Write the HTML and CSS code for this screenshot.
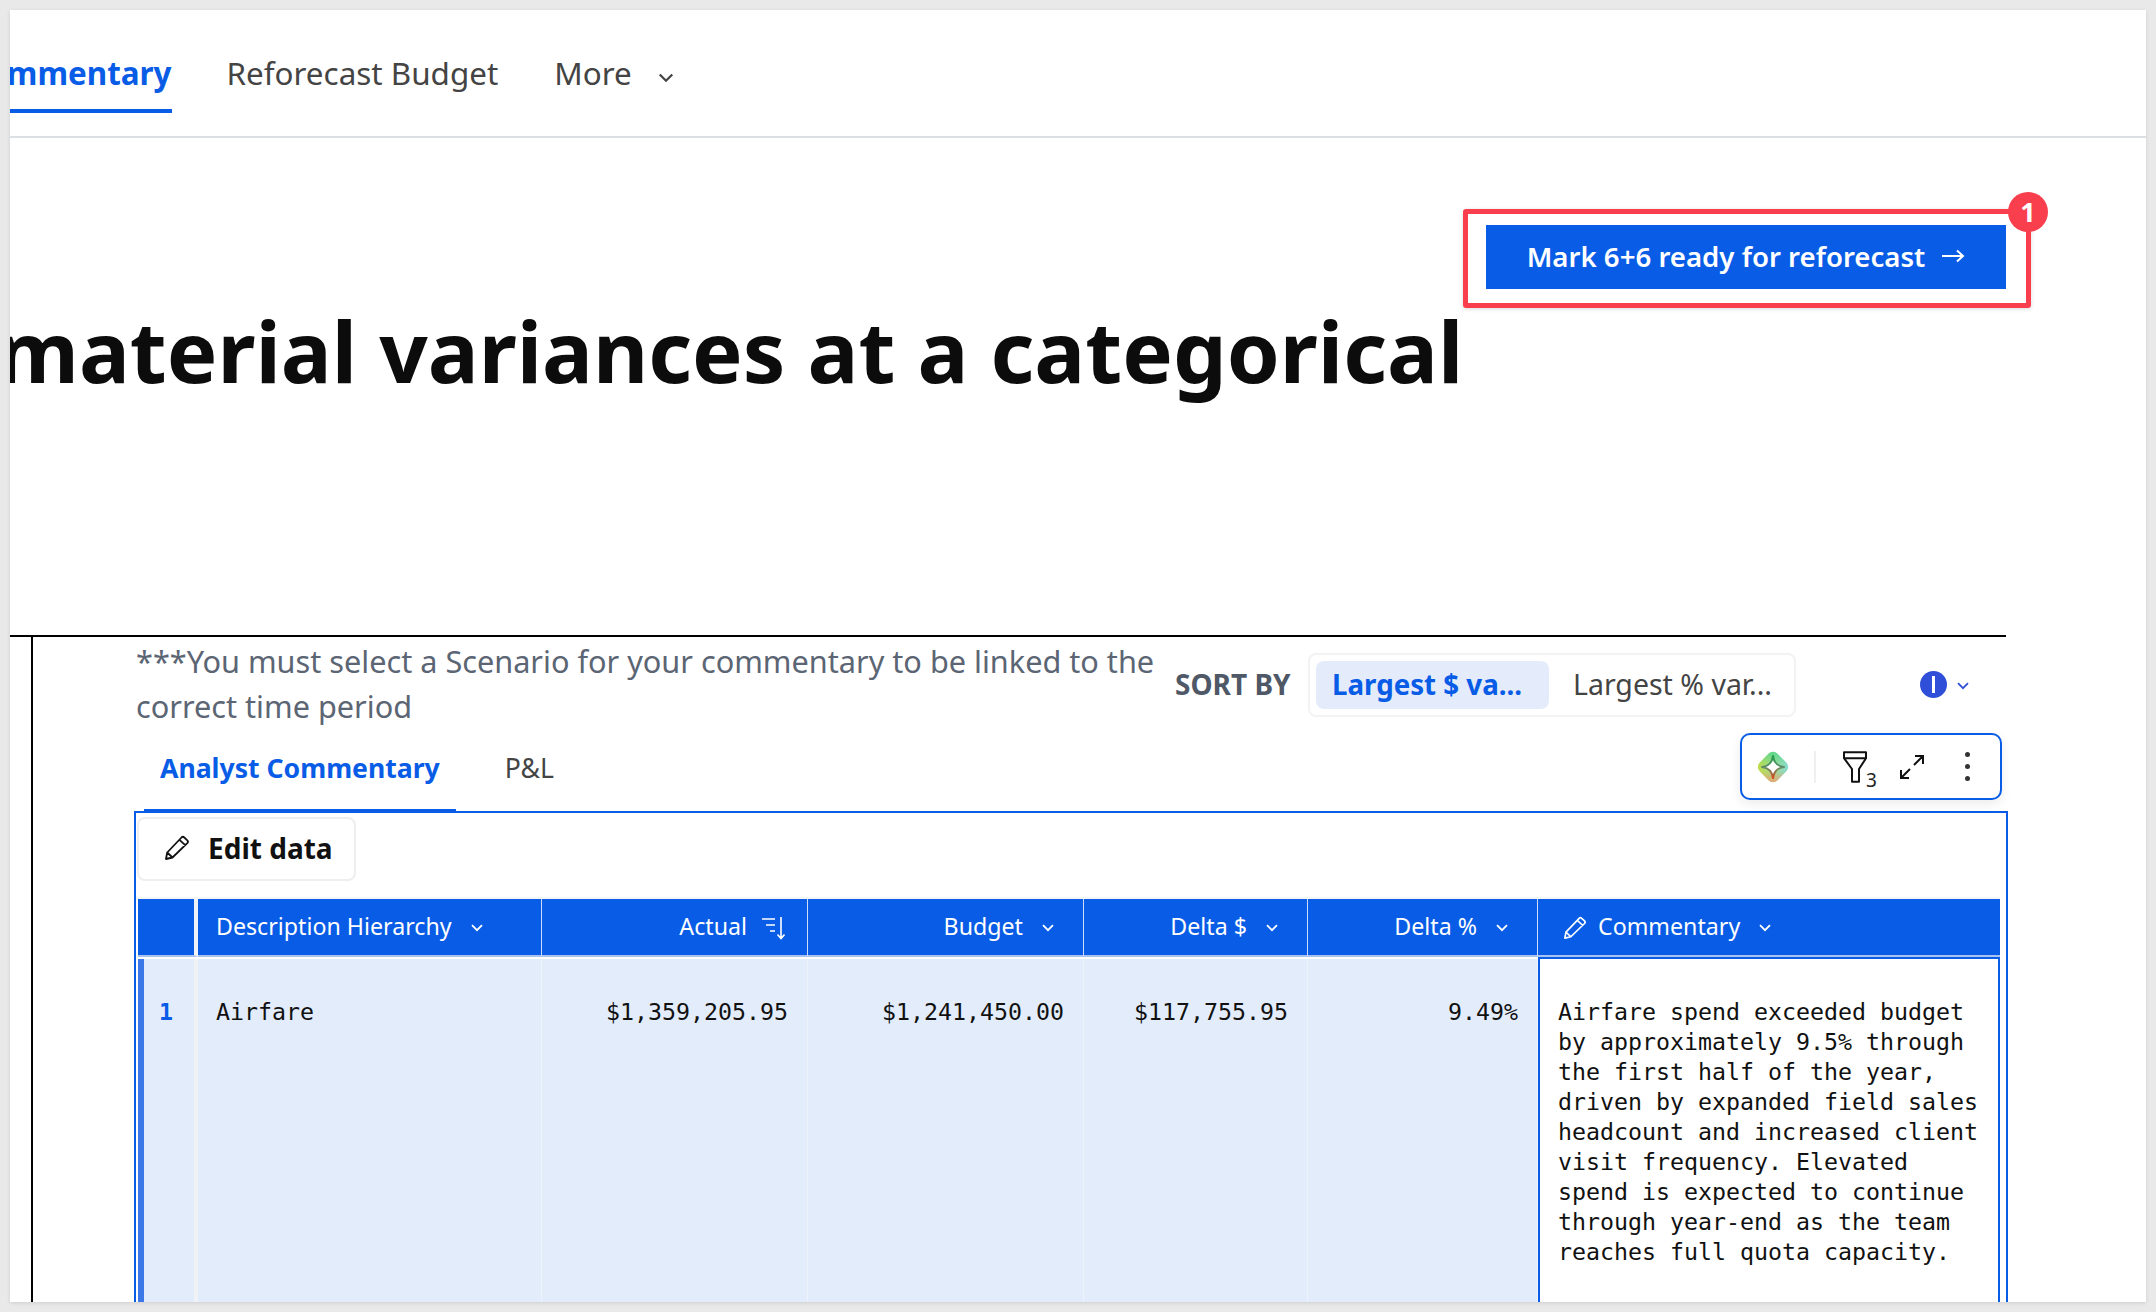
FILE: index.html
```html
<!DOCTYPE html>
<html>
<head>
    <title>Variance Commentary</title>
    <meta charset="UTF-8">
    <link rel="stylesheet" href="styles.css">
</head>
<body>
    <svg class="defs" width="0" height="0">
        <symbol id="chev" viewBox="0 0 12 8"><path d="M1 1.200l5 5 5-5" fill="none" stroke="currentColor" stroke-width="1.800"/></symbol>
        <symbol id="pencil" viewBox="0 0 26 26"><path d="M2 24l1.200-6.500L17.500 2.500a2 2 0 0 1 2.800 0l3 2.800a2 2 0 0 1 0 2.800L8.500 22.500zM3.200 17.500l5.300 5M15.500 4.800l6 5.500" fill="none" stroke="currentColor" stroke-width="1.800" stroke-linejoin="round"/></symbol>
    </svg>
    <div class="window">
        <div class="nav">
            <a class="nav-item nav-active">Commentary</a>
            <a class="nav-item">Reforecast Budget</a>
            <a class="nav-item">More <svg class="chev nav-chev"><use href="#chev"/></svg></a>
        </div>

        <div class="hero">
            <div class="action-row">
                <div class="highlight">
                    <button class="primary">Mark 6+6 ready for reforecast
                        <svg class="arrow" viewBox="0 0 24 14"><path d="M1 7h21M16 1.500L22 7l-6 5.500" fill="none" stroke="#fff" stroke-width="2"/></svg>
                    </button>
                    <span class="badge">1</span>
                </div>
            </div>
            <h1>material variances at a categorical</h1>
        </div>

        <div class="panel">
            <div class="panel-inner">
                <div class="top-row">
                    <p class="note">***You must select a Scenario for your commentary to be linked to the correct time period</p>
                    <span class="sort-label">SORT BY</span>
                    <div class="segment">
                        <span class="seg seg-active">Largest $ va...</span>
                        <span class="seg">Largest % var...</span>
                    </div>
                    <span class="info"><i></i></span>
                    <svg class="chev info-chev"><use href="#chev"/></svg>
                </div>

                <div class="tab-row">
                    <a class="tab tab-active">Analyst Commentary</a>
                    <a class="tab">P&amp;L</a>
                    <div class="toolbar">
                        <svg class="spark" viewBox="-1 -1 34 34">
                            <defs>
                                <linearGradient id="sparkA" x1="0" y1="1" x2="1" y2="0">
                                    <stop offset="0" stop-color="#c4dc3c"/>
                                    <stop offset="1" stop-color="#7fdcdc"/>
                                </linearGradient>
                                <linearGradient id="sparkB" x1="0" y1="0" x2="1" y2="1">
                                    <stop offset="0" stop-color="#4fd68c"/>
                                    <stop offset=".45" stop-color="#4fd68c" stop-opacity="0"/>
                                    <stop offset=".6" stop-color="#f59a70" stop-opacity="0"/>
                                    <stop offset="1" stop-color="#f59a70"/>
                                </linearGradient>
                                <linearGradient id="sparkC" x1="0" y1="0" x2="0" y2="1">
                                    <stop offset="0" stop-color="#1f9e4a"/>
                                    <stop offset=".5" stop-color="#5f8f6a"/>
                                    <stop offset="1" stop-color="#d9481c"/>
                                </linearGradient>
                            </defs>
                            <g transform="rotate(45 16 16)">
                                <rect x="3.500" y="3.500" width="25" height="25" rx="6" fill="url(#sparkA)"/>
                                <rect x="3.500" y="3.500" width="25" height="25" rx="6" fill="url(#sparkB)"/>
                            </g>
                            <path d="M16 5C17 12 20 15 27 16 20 17 17 20 16 27 15 20 12 17 5 16 12 15 15 12 16 5z" fill="#fff" stroke="url(#sparkC)" stroke-width="2" stroke-linejoin="round"/>
                        </svg>
                        <span class="tool-sep"></span>
                        <span class="filter">
                            <svg class="funnel" viewBox="0 0 24 32"><path d="M1 1.200h22v6L16 18v12.800H9V18L1 7.200zM1 7.200h22" fill="none" stroke="#111" stroke-width="2" stroke-linejoin="round"/></svg>
                            <span class="filter-count">3</span>
                        </span>
                        <svg class="expand" viewBox="0 0 24 24"><path d="M14 10l9-9M15 1h8v8M10 14l-9 9M1 15v8h8" fill="none" stroke="#111" stroke-width="2"/></svg>
                        <span class="dots"><i></i><i></i><i></i></span>
                    </div>
                </div>

                <div class="frame">
                    <div class="edit-row">
                        <button class="edit-btn"><svg class="edit-icon"><use href="#pencil"/></svg>Edit data</button>
                    </div>
                    <div class="grid head">
                        <div class="th th-index"></div>
                        <div class="th">Description Hierarchy <svg class="chev"><use href="#chev"/></svg></div>
                        <div class="th th-num">Actual
                            <svg class="sort" viewBox="0 0 24 24"><path d="M1 3h13M5 9h9M9 15h5M20 1v21M16.500 18.500l3.500 4 3.500-4" fill="none" stroke="#fff" stroke-width="1.600"/></svg>
                        </div>
                        <div class="th th-num">Budget <svg class="chev"><use href="#chev"/></svg></div>
                        <div class="th th-num">Delta $ <svg class="chev"><use href="#chev"/></svg></div>
                        <div class="th th-num">Delta % <svg class="chev"><use href="#chev"/></svg></div>
                        <div class="th th-comment"><svg class="th-pencil"><use href="#pencil"/></svg>Commentary <svg class="chev"><use href="#chev"/></svg></div>
                    </div>
                    <div class="grid body">
                        <div class="td td-index">1</div>
                        <div class="td">Airfare</div>
                        <div class="td td-num">$1,359,205.95</div>
                        <div class="td td-num">$1,241,450.00</div>
                        <div class="td td-num">$117,755.95</div>
                        <div class="td td-num">9.49%</div>
                        <div class="td td-comment">Airfare spend exceeded budget by approximately 9.5% through the first half of the year, driven by expanded field sales headcount and increased client visit frequency. Elevated spend is expected to continue through year-end as the team reaches full quota capacity.</div>
                    </div>
                </div>
            </div>
        </div>
    </div>
</body>
</html>
```

FILE: styles.css
```css
html, body { height: 100%; }
body {
    margin: 0;
    background: #e9e9e9;
    font-family: "Noto Sans", sans-serif;
    color: #444;
    overflow: hidden;
}
.defs { position: absolute; }
.window {
    margin: 10px;
    height: 1292px;
    background: #fff;
    overflow: hidden;
    box-shadow: 0 1px 4px rgba(0, 0, 0, 0.12);
}
.chev { width: 12px; height: 8px; margin-left: 14px; vertical-align: 3px; }

/* top nav */
.nav {
    display: flex;
    height: 126px;
    border-bottom: 2px solid #dce0e4;
    margin-left: -43px;
}
.nav-item {
    font-size: 31.4px;
    line-height: 40px;
    padding-top: 43px;
    margin-right: 55px;
    color: #444;
    white-space: nowrap;
}
.nav-active {
    color: #085ce6;
    font-weight: 700;
    height: 56px;
    border-bottom: 4px solid #085ce6;
}
.nav-item + .nav-item + .nav-item { margin-left: 1px; }
.nav-chev { width: 16px; height: 10px; margin-left: 18px; vertical-align: 2px; }

/* hero */
.hero { height: 497px; }
.action-row {
    display: flex;
    justify-content: flex-end;
    padding: 71px 115px 0 0;
}
.highlight {
    position: relative;
    border: 5px solid #f93e4d;
    border-radius: 3px;
    padding: 11px 20px 14px 18px;
    box-shadow: 0 1px 4px rgba(0, 0, 0, 0.15);
}
.primary {
    display: flex;
    align-items: center;
    justify-content: center;
    width: 520px;
    height: 64px;
    padding: 0 0 2px;
    background: #085ce6;
    border: none;
    color: #fff;
    font-family: inherit;
    font-size: 27.6px;
    font-weight: 600;
}
.arrow { width: 24px; height: 14px; margin-left: 16px; }
.badge {
    position: absolute;
    top: -22px;
    right: -22px;
    width: 40px;
    height: 40px;
    line-height: 40px;
    border-radius: 50%;
    background: #f93e4d;
    color: #fff;
    font-size: 27px;
    font-weight: 700;
    text-align: center;
}
h1 {
    margin: -8px 0 0 -14px;
    font-size: 85px;
    line-height: 100px;
    font-weight: 700;
    color: #0c0c0c;
    white-space: nowrap;
}

/* panel */
.panel {
    width: 1996px;
    border-top: 2px solid #000;
}
.panel-inner {
    margin-left: 21px;
    border-left: 2px solid #000;
    padding-left: 101px;
    height: 700px;
}
.top-row {
    display: flex;
    align-items: flex-start;
    height: 96px;
}
.note {
    margin: 2px 0 0 2px;
    width: 1039px;
    font-size: 30.66px;
    line-height: 45px;
    color: #5b6573;
}
.sort-label {
    font-size: 28px;
    font-weight: 700;
    color: #4f5866;
    margin-top: 28px;
    width: 133px;
    white-space: nowrap;
}
.segment {
    display: flex;
    margin-top: 16px;
    width: 488px;
    height: 64px;
    box-sizing: border-box;
    border: 2px solid #f2f3f5;
    border-radius: 8px;
    padding: 6px;
}
.seg {
    font-size: 28.5px;
    line-height: 46px;
    padding: 0 16px;
    white-space: nowrap;
    color: #444;
}
.seg-active {
    width: 233px;
    box-sizing: border-box;
    height: 48px;
    margin-right: 8px;
    background: #e4ebfb;
    border-radius: 8px;
    color: #085ce6;
    font-size: 27.7px;
    font-weight: 700;
}
.info {
    width: 27px;
    height: 27px;
    margin: 34px 0 0 124px;
    border-radius: 50%;
    background: #2f4fd8;
    display: flex;
    justify-content: center;
    align-items: center;
}
.info i { width: 3px; height: 17px; background: #fff; }
.info-chev { margin: 45px 0 0 10px; color: #2f4fd8; }

/* tabs + toolbar */
.tab-row {
    position: relative;
    display: flex;
    height: 78px;
}
.tab {
    font-size: 26.6px;
    line-height: 40px;
    padding: 15px 16px 0;
    margin-left: 10px;
    margin-right: 23px;
    color: #444;
    height: 61px;
    white-space: nowrap;
}
.tab-active {
    color: #085ce6;
    font-weight: 700;
    border-bottom: 3px solid #085ce6;
}
.toolbar {
    position: absolute;
    left: 1606px;
    top: 0;
    width: 262px;
    height: 67px;
    box-sizing: border-box;
    border: 2px solid #085ce6;
    border-radius: 10px;
    background: #fff;
    box-shadow: 0 4px 12px rgba(0, 0, 0, 0.08);
    display: flex;
    align-items: center;
}
.spark { width: 34px; height: 34px; margin-left: 14px; }
.tool-sep { width: 2px; height: 32px; background: #f0f0f0; margin-left: 24px; }
.filter { display: flex; margin-left: 27px; position: relative; }
.funnel { width: 24px; height: 32px; }
.filter-count { font-size: 19px; line-height: 18px; color: #222; position: absolute; left: 23px; top: 20px; }
.expand { width: 24px; height: 24px; margin-left: 33px; }
.dots { display: flex; flex-direction: column; gap: 7px; margin-left: 41px; }
.dots i { width: 5px; height: 5px; border-radius: 50%; background: #333; }

/* table */
.frame {
    width: 1874px;
    height: 600px;
    box-sizing: border-box;
    border: 2px solid #085ce6;
    border-bottom: none;
    background: #fff;
}
.edit-row { padding: 4px 0 16px 1px; }
.edit-btn {
    display: flex;
    align-items: center;
    width: 219px;
    height: 64px;
    box-sizing: border-box;
    padding: 0 0 3px 25px;
    background: #fff;
    border: 2px solid #eee;
    border-radius: 8px;
    color: #111;
    font-family: inherit;
    font-size: 28px;
    font-weight: 700;
}
.edit-icon { width: 26px; height: 26px; margin-right: 18px; }
.grid {
    display: grid;
    grid-template-columns: 60px 344px 266px 276px 224px 230px 462px;
    margin-left: 2px;
}
.head { border-top: 2px solid #f5f5f5; width: 1862px; }
.th {
    box-sizing: border-box;
    height: 58px;
    padding: 0 0 0 18px;
    background: #085ce6;
    border-bottom: 2px solid #a9c3f0;
    border-right: 1px solid #cddcf7;
    color: #fff;
    font-size: 23.2px;
    line-height: 55px;
    white-space: nowrap;
}
.th-index { border-right: 4px solid #f0f2f6; }
.th-num { text-align: right; padding: 0 29px 0 0; }
.th-comment { border-right: none; padding-left: 25px; }
.th-pencil { width: 24px; height: 24px; margin-right: 11px; vertical-align: -5px; }
.sort { width: 24px; height: 24px; margin-left: 8px; vertical-align: -5px; margin-right: -7px; }
.th .chev { margin-left: 13px; }
.body { height: 360px; margin-top: 2px; }
.td {
    box-sizing: border-box;
    background: #e3ecfb;
    border-right: 1px solid #edf2fb;
    padding: 38px 0 0 18px;
    font-family: "DejaVu Sans Mono", monospace;
    font-size: 23.25px;
    line-height: 30px;
    color: #111;
}
.td-index {
    border-left: 6px solid #3d78e8;
    border-right: 4px solid #f0f2f6;
    padding-left: 15px;
    color: #085ce6;
    font-weight: 700;
}
.td-num { text-align: right; padding: 38px 19px 0 0; white-space: nowrap; }
.td-comment {
    margin-top: -2px;
    padding: 38px 11px 0 18px;
    background: #fff;
    border: 2px solid #085ce6;
    border-bottom: none;
}
```
